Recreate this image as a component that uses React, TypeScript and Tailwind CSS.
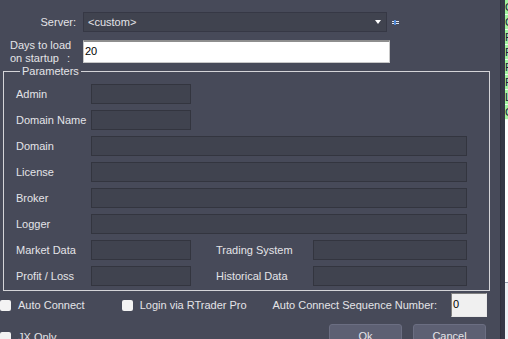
const font = { fontFamily: '"Liberation Sans", Arial, sans-serif' };

const Field: React.FC<{ w: string }> = ({ w }) => (
  <div className={`${w} h-[20px] shrink-0 bg-[#40434f] border border-[#33353f]`} />
);

const Row: React.FC<{ label: string; children: React.ReactNode }> = ({ label, children }) => (
  <div className="flex items-center h-[20px]">
    <span className="w-[75px] shrink-0">{label}</span>
    {children}
  </div>
);

const Check: React.FC<{ label: string }> = ({ label }) => (
  <div className="flex items-center">
    <span className="w-[11px] h-[11px] shrink-0 bg-[#f3f3f3] rounded-[2px] mr-[7px]" />
    <span>{label}</span>
  </div>
);

const sideRows = ['C', 'C', 'R', 'R', 'R', 'R', 'L', 'C'];

export default function App() {
  return (
    <div
      className="w-[508px] h-[339px] overflow-hidden flex bg-[#474a59] text-[#e4e4e8] text-[11px] leading-[14px] whitespace-nowrap"
      style={font}
    >
      <div className="w-[500px] shrink-0 flex flex-col">
        {/* server */}
        <div className="flex items-center mt-[12px] h-[20px]">
          <span className="w-[76px] text-right">Server:</span>
          <div className="ml-[7px] w-[304px] h-[20px] bg-[#40434f] border border-[#363845] flex items-center pl-[4px] pr-[5px]">
            <span className="flex-1">&lt;custom&gt;</span>
            <svg width="6" height="4" viewBox="0 0 6 4">
              <path d="M0 0h6L3 4z" fill="#ffffff" />
            </svg>
          </div>
          <svg className="ml-[5px]" width="7" height="5" viewBox="0 0 7 5">
            <rect x="0" y="1" width="7" height="1" fill="#dfe6f2" />
            <rect x="0" y="3" width="7" height="1" fill="#dfe6f2" />
            <rect x="2" y="0" width="2" height="5" fill="#4b86d6" />
          </svg>
        </div>

        {/* days to load */}
        <div className="flex mt-[6px] h-[26px]">
          <div className="w-[83px] pl-[10px] pt-[1px] leading-[13px]">
            <div>Days to load</div>
            <div>
              on startup <span className="ml-[5px]">:</span>
            </div>
          </div>
          <div className="mt-[2px] w-[307px] h-[23px] bg-white border border-[#c8c8c8] border-t-[2px] border-t-[#8e8e8e] text-black pl-[1px] pt-[2px]">
            20
          </div>
        </div>

        {/* parameters */}
        <fieldset className="ml-[3px] w-[487px] border border-[#d4d4d8] pl-[12px] pr-[22px] pb-[4px]">
          <legend className="ml-[4px] px-[2px] leading-[14px]">Parameters</legend>
          <div className="flex flex-col gap-[6px] pt-[6px]">
            <Row label="Admin">
              <Field w="w-[100px]" />
            </Row>
            <Row label="Domain Name">
              <Field w="w-[100px]" />
            </Row>
            <Row label="Domain">
              <Field w="w-[376px]" />
            </Row>
            <Row label="License">
              <Field w="w-[376px]" />
            </Row>
            <Row label="Broker">
              <Field w="w-[376px]" />
            </Row>
            <Row label="Logger">
              <Field w="w-[376px]" />
            </Row>
            <Row label="Market Data">
              <Field w="w-[100px]" />
              <span className="ml-[25px] w-[97px] shrink-0">Trading System</span>
              <Field w="w-[154px]" />
            </Row>
            <Row label="Profit / Loss">
              <Field w="w-[100px]" />
              <span className="ml-[25px] w-[97px] shrink-0">Historical Data</span>
              <Field w="w-[154px]" />
            </Row>
          </div>
        </fieldset>

        {/* options */}
        <div className="flex items-start mt-[2px]">
          <div className="flex flex-col">
            <div className="h-[24px] flex items-center">
              <Check label="Auto Connect" />
            </div>
            <div className="h-[24px] flex items-center mt-[8px]">
              <Check label="JX Only" />
            </div>
          </div>
          <div className="h-[24px] flex items-center ml-[37px]">
            <Check label="Login via RTrader Pro" />
          </div>
          <div className="flex flex-col items-end ml-auto mr-[13px]">
            <div className="flex items-center">
              <span className="mr-[14px]">Auto Connect Sequence Number:</span>
              <div className="w-[36px] h-[24px] bg-[#f0f0f0] border border-[#e8e8e8] border-t-[#808080] border-l-[#808080] text-black pl-[1px] pt-[4px] leading-[12px]">
                0
              </div>
            </div>
            <div className="flex gap-[11px] mt-[7px] pr-[1px]">
              <button className="w-[73px] h-[22px] bg-[#5d6073] border border-[#6b6e82] rounded-[3px] text-center pt-[1px]">
                Ok
              </button>
              <button className="w-[73px] h-[22px] bg-[#5d6073] border border-[#6b6e82] rounded-[3px] text-center pt-[1px]">
                Cancel
              </button>
            </div>
          </div>
        </div>
      </div>

      {/* side strip */}
      <div className="w-[5px] shrink-0 bg-[#363846] border-l border-[#2f313d]" />
      <div className="w-[3px] shrink-0 flex flex-col">
        {sideRows.map((c, i) => (
          <div
            key={i}
            className="h-[15px] bg-[#a2f3a0] border-b border-[#e8ffe8] text-[#1a1a3a] overflow-hidden leading-[14px]"
          >
            {c}
          </div>
        ))}
        <div className="h-[163px] bg-white border-b border-[#9aa0b0]" />
        <div className="flex-1 bg-[#eef0f4]" />
      </div>
    </div>
  );
}
